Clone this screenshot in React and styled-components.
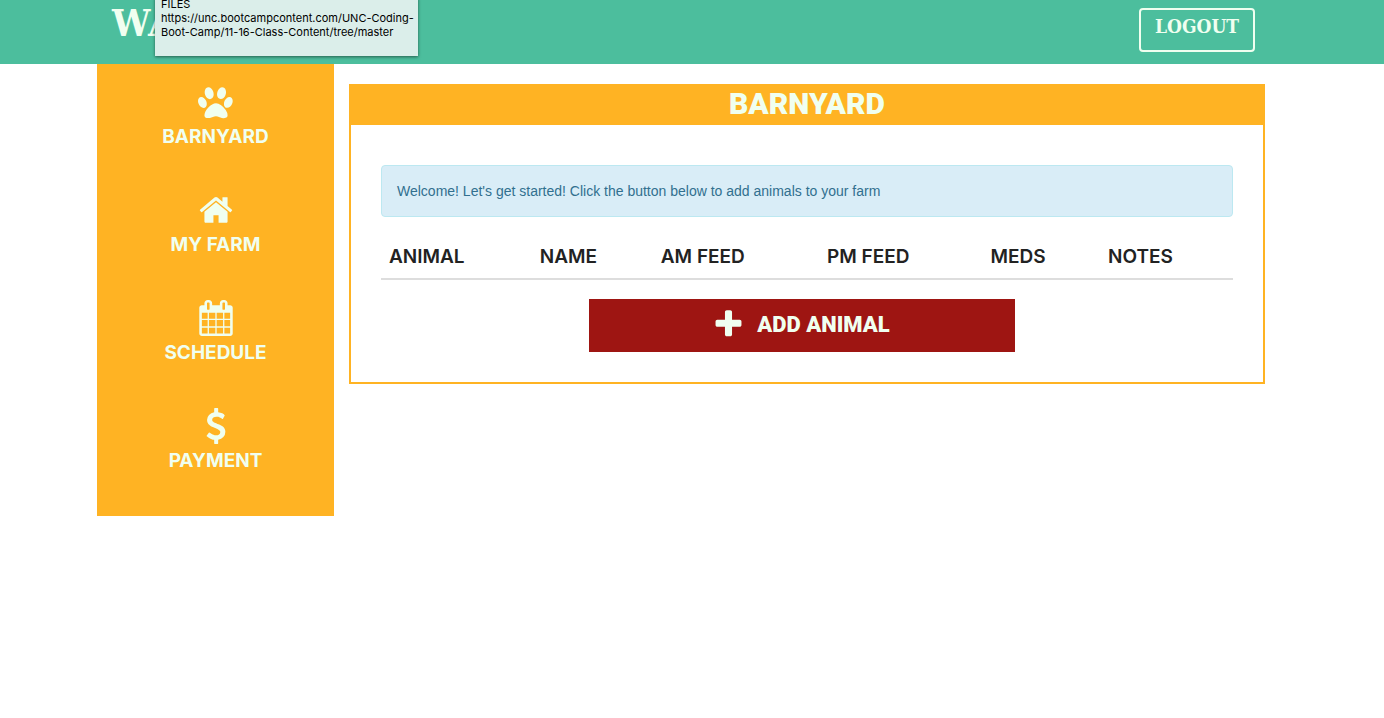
import React from "react";
import styled, { createGlobalStyle } from "styled-components";

const mint = "#f0fff0";
const amber = "#ffb323";
const green = "#4cbe9d";

const labelFont = 'Inter, "Open Sans", sans-serif';
const slabFont = '"DejaVu Serif Condensed", "DejaVu Serif", serif';
const blockFont = 'Roboto, "Liberation Sans", sans-serif';

const GlobalStyle = createGlobalStyle`
  *, *::before, *::after { box-sizing: border-box; }
  body {
    margin: 0;
    background: #fff;
    color: #222;
    font: 14px/20px "Liberation Sans", Arial, sans-serif;
  }
`;

const NavBar = styled.header`
  height: 64px;
  overflow: hidden;
  background: ${green};
  padding-right: 22px;
`;

const Container = styled.div`
  max-width: 1168px;
  margin: 0 auto;
`;

const NavInner = styled(Container)`
  position: relative;
  display: flex;
  align-items: flex-start;
  justify-content: space-between;
  padding: 0 10px 0 15px;
`;

const Brand = styled.a`
  color: ${mint};
  font: bold 38px/46px ${slabFont};
  text-decoration: none;
`;

const Logout = styled.button`
  width: 116px;
  height: 44px;
  margin-top: 8px;
  padding: 0 0 8px;
  border: 2px solid ${mint};
  border-radius: 4px;
  background: transparent;
  color: ${mint};
  font: bold 19px/32px ${slabFont};
  cursor: pointer;
`;

const Tooltip = styled.div`
  position: absolute;
  top: -3px;
  left: 58px;
  width: 263px;
  padding: 0 0 17px 6px;
  background: #dbeeea;
  box-shadow: 0 1px 3px rgba(0, 0, 0, 0.5);
  color: #000;
  font: 11px/14px Inter, sans-serif;
  white-space: nowrap;
`;

const Page = styled.div`
  padding-right: 22px;
`;

const Columns = styled(Container)`
  display: flex;
  align-items: flex-start;
  gap: 15px;
`;

const Sidebar = styled.nav`
  flex: 0 0 237px;
  padding-bottom: 20px;
  background: ${amber};
`;

const SideLink = styled.a`
  display: flex;
  flex-direction: column;
  align-items: center;
  gap: 6px;
  padding: 20px 0 24px;
  color: ${mint};
  font: bold 19px/22px ${labelFont};
  text-decoration: none;
`;

const Glyph = styled.svg`
  display: block;
  width: ${(p) => p.$size}px;
  height: ${(p) => p.$size}px;
  fill: currentColor;
`;

const Panel = styled.main`
  flex: 1;
  min-width: 0;
  margin-top: 20px;
  border: 2px solid ${amber};
`;

const PanelTitle = styled.h1`
  margin: 0;
  background: ${amber};
  color: ${mint};
  font: 900 30px/36px ${blockFont};
  padding-bottom: 3px;
  text-align: center;
`;

const PanelBody = styled.div`
  padding: 40px 30px 30px;
`;

const Alert = styled.p`
  margin: 0 0 20px;
  padding: 15px;
  border: 1px solid #bce8f1;
  border-radius: 4px;
  background: #d9edf7;
  color: #31708f;
`;

const Table = styled.table`
  width: 100%;
  table-layout: fixed;
  border-collapse: separate;
  border-spacing: 0;
`;

const HeadCell = styled.th`
  width: ${(p) => p.$width};
  padding: 8px 8px 9px;
  border-bottom: 2px solid #ddd;
  font: 600 19px/24px ${labelFont};
  text-align: left;
  white-space: nowrap;
`;

const AddButton = styled.button`
  display: flex;
  align-items: center;
  justify-content: center;
  gap: 12px;
  width: 50%;
  height: 53px;
  margin: 19px 0 0 calc(25% - 5px);
  padding: 0 2px 2px 0;
  border: 0;
  background: #9e1512;
  color: ${mint};
  font: 900 22px/30px ${blockFont};
  cursor: pointer;
`;

const icons = {
  paw: "M780 508q0 60-19 113.5t-63 92.5-105 39q-76 0-138-57.5t-92-135.5-30-151q0-60 19-113.5t63-92.5 105-39q77 0 138.5 57.5t91.5 135 30 151.5zm-342 483q0 80-42 139t-119 59q-76 0-141.5-55.5t-100.5-133.5-35-152q0-80 42-139.5t119-59.5q76 0 141.5 55.5t100.5 134 35 152.5zm458-28q118 0 255 97.5t229 237 92 254.5q0 46-17 76.5t-48.5 45-64.5 20-76 5.5q-68 0-187.5-45t-182.5-45q-66 0-192.5 44.5t-200.5 44.5q-183 0-183-146 0-86 56-191.5t139.5-192.5 187.5-146 193-59zm239-211q-61 0-105-39t-63-92.5-19-113.5q0-74 30-151.5t91.5-135 138.5-57.5q61 0 105 39t63 92.5 19 113.5q0 73-30 151t-92 135.5-138 57.5zm432-104q77 0 119 59.5t42 139.5q0 74-35 152t-100.5 133.5-141.5 55.5q-77 0-119-59t-42-139q0-74 35-152.5t100.5-134 141.5-55.5z",
  home: "M1472 992v480q0 26-19 45t-45 19h-384v-384h-256v384h-384q-26 0-45-19t-19-45v-480q0-1 .5-3t.5-3l575-474 575 474q1 2 1 6zm223-69l-62 74q-8 9-21 11h-3q-13 0-21-7l-692-577-692 577q-12 8-24 7-13-2-21-11l-62-74q-8-10-7-23.5t11-21.5l719-599q32-26 76-26t76 26l244 204v-195q0-14 9-23t23-9h192q14 0 23 9t9 23v408l219 182q10 8 11 21.5t-7 23.5z",
  calendar: "M192 1664h288v-288h-288v288zm352 0h320v-288h-320v288zm-352-352h288v-320h-288v320zm352 0h320v-320h-320v320zm-352-384h288v-288h-288v288zm736 736h320v-288h-320v288zm-384-736h320v-288h-320v288zm768 736h288v-288h-288v288zm-384-352h320v-320h-320v320zm-352-864v-288q0-13-9.5-22.5t-22.5-9.5h-64q-13 0-22.5 9.5t-9.5 22.5v288q0 13 9.5 22.5t22.5 9.5h64q13 0 22.5-9.5t9.5-22.5zm736 864h288v-320h-288v320zm-384-384h320v-288h-320v288zm384 0h288v-288h-288v288zm32-480v-288q0-13-9.5-22.5t-22.5-9.5h-64q-13 0-22.5 9.5t-9.5 22.5v288q0 13 9.5 22.5t22.5 9.5h64q13 0 22.5-9.5t9.5-22.5zm384-64v1280q0 52-38 90t-90 38h-1408q-52 0-90-38t-38-90v-1280q0-52 38-90t90-38h128v-96q0-66 47-113t113-47h64q66 0 113 47t47 113v96h384v-96q0-66 47-113t113-47h64q66 0 113 47t47 113v96h128q52 0 90 38t38 90z",
  dollar: "M1362 1185q0 153-99.5 263.5t-258.5 136.5v175q0 14-9 23t-23 9h-135q-13 0-22.5-9.5t-9.5-22.5v-175q-66-9-127.5-31t-101.5-44.5-74-48-46.5-37.5-17.5-18q-17-21-2-41l103-135q7-10 23-12 15-2 24 9l2 2q113 99 243 125 37 8 74 8 81 0 142.5-43t61.5-122q0-28-15-53t-33.5-42-58.5-37.5-66-32-80-32.5q-39-16-61.5-25t-61.5-26.5-62.5-31-56.5-35.5-53.5-42.5-43.5-49-35.5-58-21-66.5-8.5-78q0-138 98-242t255-134v-180q0-13 9.5-22.5t22.5-9.5h135q14 0 23 9t9 23v176q57 6 110.5 23t87 33.5 63.5 37.5 39 29 15 14q17 18 5 38l-81 146q-8 15-23 16-14 3-27-7-3-3-14.5-12t-39-26.5-58.5-32-74.5-26-85.5-11.5q-95 0-155 43t-60 111q0 26 8.5 48t29.5 41.5 39.5 33 56 31 60.5 27 70 27.5q53 20 81 31.5t76 35 75.5 42.5 62 50 53 63.5 31.5 76.5 13 94z",
  plus: "M1600 736v192q0 40-28 68t-68 28h-416v416q0 40-28 68t-68 28h-192q-40 0-68-28t-28-68v-416h-416q-40 0-68-28t-28-68v-192q0-40 28-68t68-28h416v-416q0-40 28-68t68-28h192q40 0 68 28t28 68v416h416q40 0 68 28t28 68z",
};

function Icon({ name, size = 36 }) {
  return (
    <Glyph $size={size} viewBox="0 0 1792 1792" aria-hidden="true">
      <path d={icons[name]} />
    </Glyph>
  );
}

const links = [
  { icon: "paw", label: "BARNYARD" },
  { icon: "home", label: "MY FARM" },
  { icon: "calendar", label: "SCHEDULE" },
  { icon: "dollar", label: "PAYMENT" },
];

const columns = [
  { label: "ANIMAL", width: "17.7%" },
  { label: "NAME", width: "14.2%" },
  { label: "AM FEED", width: "19.5%" },
  { label: "PM FEED", width: "19.2%" },
  { label: "MEDS", width: "13.8%" },
  { label: "NOTES", width: "15.6%" },
];

export default function App() {
  return (
    <>
      <GlobalStyle />
      <NavBar>
        <NavInner>
          <Brand href="#">WA</Brand>
          <Logout type="button">LOGOUT</Logout>
          <Tooltip role="tooltip">
            FILES
            <br />
            https://unc.bootcampcontent.com/UNC-Coding-
            <br />
            Boot-Camp/11-16-Class-Content/tree/master
          </Tooltip>
        </NavInner>
      </NavBar>
      <Page>
        <Columns>
          <Sidebar>
            {links.map((link) => (
              <SideLink key={link.label} href="#">
                <Icon name={link.icon} />
                {link.label}
              </SideLink>
            ))}
          </Sidebar>
          <Panel>
            <PanelTitle>BARNYARD</PanelTitle>
            <PanelBody>
              <Alert>
                Welcome! Let's get started! Click the button below to add animals to your farm
              </Alert>
              <Table>
                <thead>
                  <tr>
                    {columns.map((column) => (
                      <HeadCell key={column.label} scope="col" $width={column.width}>
                        {column.label}
                      </HeadCell>
                    ))}
                  </tr>
                </thead>
              </Table>
              <AddButton type="button">
                <Icon name="plus" size={33} />
                ADD ANIMAL
              </AddButton>
            </PanelBody>
          </Panel>
        </Columns>
      </Page>
    </>
  );
}
